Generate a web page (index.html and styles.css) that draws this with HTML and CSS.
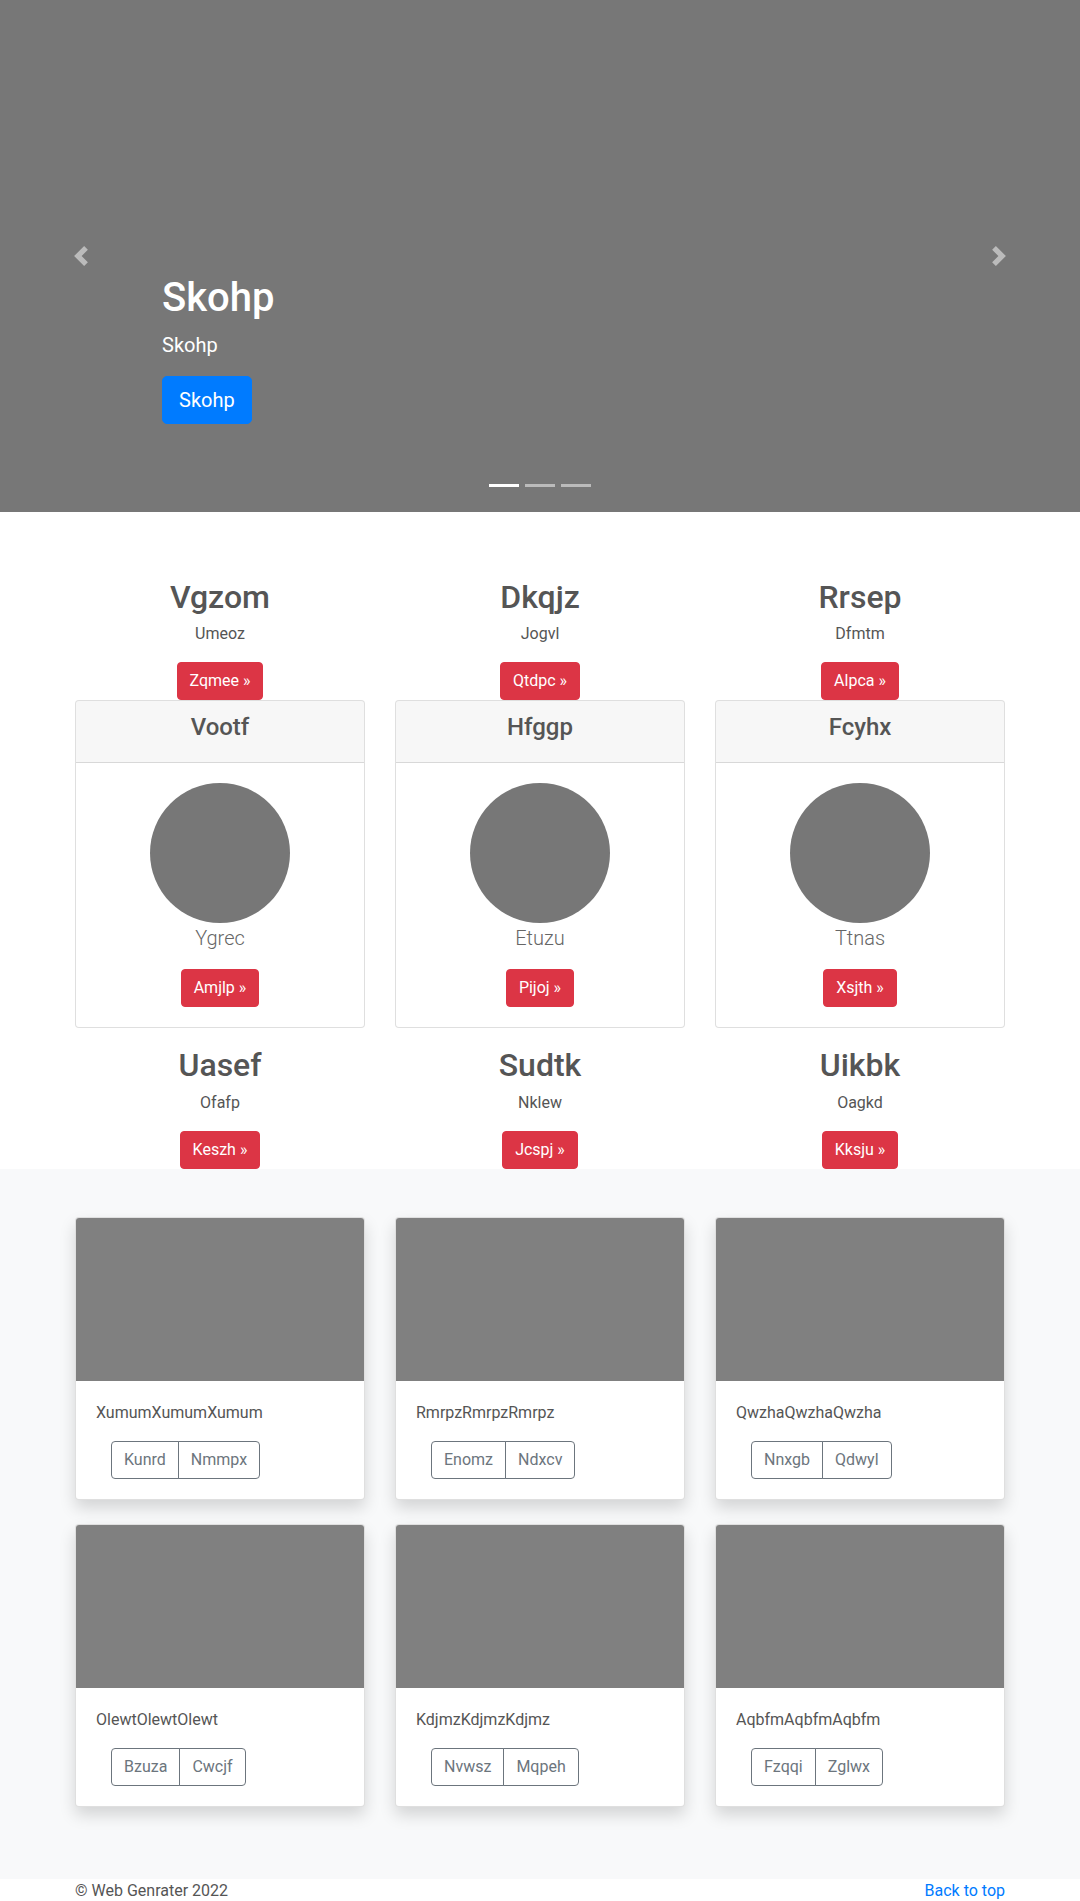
FILE: index.html
```html
<!DOCTYPE html>
<html lang="en">
<head>
<meta charset="utf-8">
<title>Web Genrater</title>
<link rel="stylesheet" href="styles.css">
</head>
<body>
<header class="hero">
  <a class="ctrl ctrl-prev" href="#"><svg class="ctrl-icon" viewBox="0 0 8 8"><path d="M5.25 0l-4 4 4 4 1.5-1.5L4.25 4l2.5-2.5L5.25 0z"/></svg></a>
  <a class="ctrl ctrl-next" href="#"><svg class="ctrl-icon" viewBox="0 0 8 8"><path d="M2.75 0l-1.5 1.5L3.75 4l-2.5 2.5L2.75 8l4-4-4-4z"/></svg></a>
  <div class="caption">
    <h1 class="caption-title">Skohp</h1>
    <p class="caption-sub">Skohp</p>
    <p class="caption-cta"><a class="btn btn-lg btn-primary" href="#">Skohp</a></p>
  </div>
  <ol class="indicators"><li class="ind active"></li><li class="ind"></li><li class="ind"></li></ol>
</header>

<section class="marketing">
  <div class="grid container">
    <div class="col">
      <h2 class="m-title">Vgzom</h2>
      <p class="m-text">Umeoz</p>
      <p class="m-act"><a class="btn btn-danger" href="#">Zqmee &raquo;</a></p>
      <div class="card">
        <div class="card-header"><h4 class="card-title">Vootf</h4></div>
        <div class="card-body">
          <svg class="avatar" viewBox="0 0 140 140"><circle cx="70" cy="70" r="70"/></svg>
          <p class="lead">Ygrec</p>
          <a class="btn btn-danger" href="#">Amjlp &raquo;</a>
        </div>
      </div>
      <h2 class="m-title">Uasef</h2>
      <p class="m-text">Ofafp</p>
      <p class="m-act"><a class="btn btn-danger" href="#">Keszh &raquo;</a></p>
    </div>
    <div class="col">
      <h2 class="m-title">Dkqjz</h2>
      <p class="m-text">Jogvl</p>
      <p class="m-act"><a class="btn btn-danger" href="#">Qtdpc &raquo;</a></p>
      <div class="card">
        <div class="card-header"><h4 class="card-title">Hfggp</h4></div>
        <div class="card-body">
          <svg class="avatar" viewBox="0 0 140 140"><circle cx="70" cy="70" r="70"/></svg>
          <p class="lead">Etuzu</p>
          <a class="btn btn-danger" href="#">Pijoj &raquo;</a>
        </div>
      </div>
      <h2 class="m-title">Sudtk</h2>
      <p class="m-text">Nklew</p>
      <p class="m-act"><a class="btn btn-danger" href="#">Jcspj &raquo;</a></p>
    </div>
    <div class="col">
      <h2 class="m-title">Rrsep</h2>
      <p class="m-text">Dfmtm</p>
      <p class="m-act"><a class="btn btn-danger" href="#">Alpca &raquo;</a></p>
      <div class="card">
        <div class="card-header"><h4 class="card-title">Fcyhx</h4></div>
        <div class="card-body">
          <svg class="avatar" viewBox="0 0 140 140"><circle cx="70" cy="70" r="70"/></svg>
          <p class="lead">Ttnas</p>
          <a class="btn btn-danger" href="#">Xsjth &raquo;</a>
        </div>
      </div>
      <h2 class="m-title">Uikbk</h2>
      <p class="m-text">Oagkd</p>
      <p class="m-act"><a class="btn btn-danger" href="#">Kksju &raquo;</a></p>
    </div>
  </div>
</section>

<section class="album">
  <div class="album-grid container">
    <div class="acard">
      <div class="acard-img"></div>
      <div class="acard-body">
        <p class="acard-text">XumumXumumXumum</p>
        <div class="btn-group"><a class="btn btn-outline" href="#">Kunrd</a><a class="btn btn-outline" href="#">Nmmpx</a></div>
      </div>
    </div>
    <div class="acard">
      <div class="acard-img"></div>
      <div class="acard-body">
        <p class="acard-text">RmrpzRmrpzRmrpz</p>
        <div class="btn-group"><a class="btn btn-outline" href="#">Enomz</a><a class="btn btn-outline" href="#">Ndxcv</a></div>
      </div>
    </div>
    <div class="acard">
      <div class="acard-img"></div>
      <div class="acard-body">
        <p class="acard-text">QwzhaQwzhaQwzha</p>
        <div class="btn-group"><a class="btn btn-outline" href="#">Nnxgb</a><a class="btn btn-outline" href="#">Qdwyl</a></div>
      </div>
    </div>
    <div class="acard">
      <div class="acard-img"></div>
      <div class="acard-body">
        <p class="acard-text">OlewtOlewtOlewt</p>
        <div class="btn-group"><a class="btn btn-outline" href="#">Bzuza</a><a class="btn btn-outline" href="#">Cwcjf</a></div>
      </div>
    </div>
    <div class="acard">
      <div class="acard-img"></div>
      <div class="acard-body">
        <p class="acard-text">KdjmzKdjmzKdjmz</p>
        <div class="btn-group"><a class="btn btn-outline" href="#">Nvwsz</a><a class="btn btn-outline" href="#">Mqpeh</a></div>
      </div>
    </div>
    <div class="acard">
      <div class="acard-img"></div>
      <div class="acard-body">
        <p class="acard-text">AqbfmAqbfmAqbfm</p>
        <div class="btn-group"><a class="btn btn-outline" href="#">Fzqqi</a><a class="btn btn-outline" href="#">Zglwx</a></div>
      </div>
    </div>
  </div>
</section>

<footer class="footer">
  <div class="footer-inner container">
    <p class="footer-text">&copy; Web Genrater 2022</p>
    <p class="footer-text"><a class="footer-link" href="#">Back to top</a></p>
  </div>
</footer>
</body>
</html>
```

FILE: styles.css
```css
* { box-sizing: border-box; }

html, body {
  margin: 0;
  padding: 0;
}

body {
  font-family: Roboto, "Liberation Sans", sans-serif;
  font-size: 16px;
  line-height: 1.5;
  color: #555;
  background: #fff;
}

.container {
  width: 930px;
  margin: 0 auto;
}

/* buttons */
.btn {
  display: inline-block;
  font-weight: 400;
  font-size: 16px;
  line-height: 1.5;
  padding: 6px 12px;
  border: 1px solid transparent;
  border-radius: 4px;
  text-decoration: none;
  text-align: center;
  vertical-align: middle;
}
.btn-lg {
  font-size: 20px;
  padding: 8px 16px;
  border-radius: 5px;
}
.btn-primary {
  background: #007bff;
  border-color: #007bff;
  color: #fff;
}
.btn-danger {
  background: #dc3545;
  border-color: #dc3545;
  color: #fff;
}
.btn-outline {
  color: #6c757d;
  border-color: #6c757d;
  background: transparent;
}

/* hero */
.hero {
  position: relative;
  height: 512px;
  background: #777;
  display: flex;
  align-items: flex-end;
  padding: 0 162px 72px;
}
.caption {
  color: #fff;
  text-align: left;
  position: relative;
  z-index: 2;
}
.caption-title {
  margin: 0 0 8px;
  font-size: 40px;
  font-weight: 500;
  line-height: 1.2;
}
.caption-sub {
  margin: 0 0 16px;
  font-size: 20px;
  line-height: 1.5;
}
.caption-cta {
  margin: 0 0 16px;
}

.ctrl {
  position: absolute;
  top: 0;
  bottom: 0;
  width: 162px;
  display: flex;
  align-items: center;
  justify-content: center;
  opacity: .5;
  z-index: 1;
}
.ctrl-prev { left: 0; }
.ctrl-next { right: 0; }
.ctrl-icon {
  width: 20px;
  height: 20px;
  fill: #fff;
}

.indicators {
  position: absolute;
  left: 0;
  right: 0;
  bottom: 0;
  margin: 0 0 15px;
  padding: 0;
  list-style: none;
  display: flex;
  justify-content: center;
  gap: 6px;
  z-index: 3;
}
.ind {
  width: 30px;
  height: 3px;
  margin: 10px 0;
  background: rgba(255,255,255,.5);
}
.ind.active { background: #fff; }

/* marketing */
.marketing {
  padding-top: 66px;
}
.grid {
  display: grid;
  grid-template-columns: repeat(3, 290px);
  column-gap: 30px;
}
.col {
  text-align: center;
}
.m-title {
  margin: 0 0 6px;
  font-size: 32px;
  font-weight: 500;
  line-height: 1.2;
}
.m-text {
  margin: 0 0 16px;
}
.m-act {
  margin: 0;
}

.card {
  border: 1px solid rgba(0,0,0,.125);
  border-radius: 4px;
  margin-bottom: 18px;
  background: #fff;
}
.card-header {
  padding: 12px 20px;
  background: rgba(0,0,0,.03);
  border-bottom: 1px solid rgba(0,0,0,.125);
  border-radius: 3px 3px 0 0;
}
.card-title {
  margin: 0 0 8px;
  font-size: 24px;
  font-weight: 500;
  line-height: 1.2;
}
.card-body {
  padding: 20px;
}
.avatar {
  display: block;
  width: 140px;
  height: 140px;
  margin: 0 auto;
  fill: #777;
}
.lead {
  margin: 0 0 16px;
  font-size: 20px;
  font-weight: 300;
  line-height: 1.5;
  color: #666;
}

/* album */
.album {
  background: #f8f9fa;
  padding: 48px 0 72px;
}
.album-grid {
  display: grid;
  grid-template-columns: repeat(3, 290px);
  column-gap: 30px;
  row-gap: 24px;
}
.acard {
  background: #fff;
  border: 1px solid rgba(0,0,0,.125);
  border-radius: 4px;
  overflow: hidden;
  box-shadow: 0 8px 16px rgba(0,0,0,.15);
}
.acard-img {
  height: 163px;
  background: #808080;
}
.acard-body {
  padding: 20px;
}
.acard-text {
  margin: 0 0 16px;
}
.btn-group {
  display: inline-flex;
  margin-left: 15px;
}
.btn-group .btn:first-child {
  border-radius: 4px 0 0 4px;
}
.btn-group .btn + .btn {
  margin-left: -1px;
  border-radius: 0 4px 4px 0;
}

/* footer */
.footer {
  background: #fff;
}
.footer-inner {
  display: flex;
  justify-content: space-between;
}
.footer-text {
  margin: 0 0 16px;
}
.footer-link {
  color: #007bff;
  text-decoration: none;
}
```
